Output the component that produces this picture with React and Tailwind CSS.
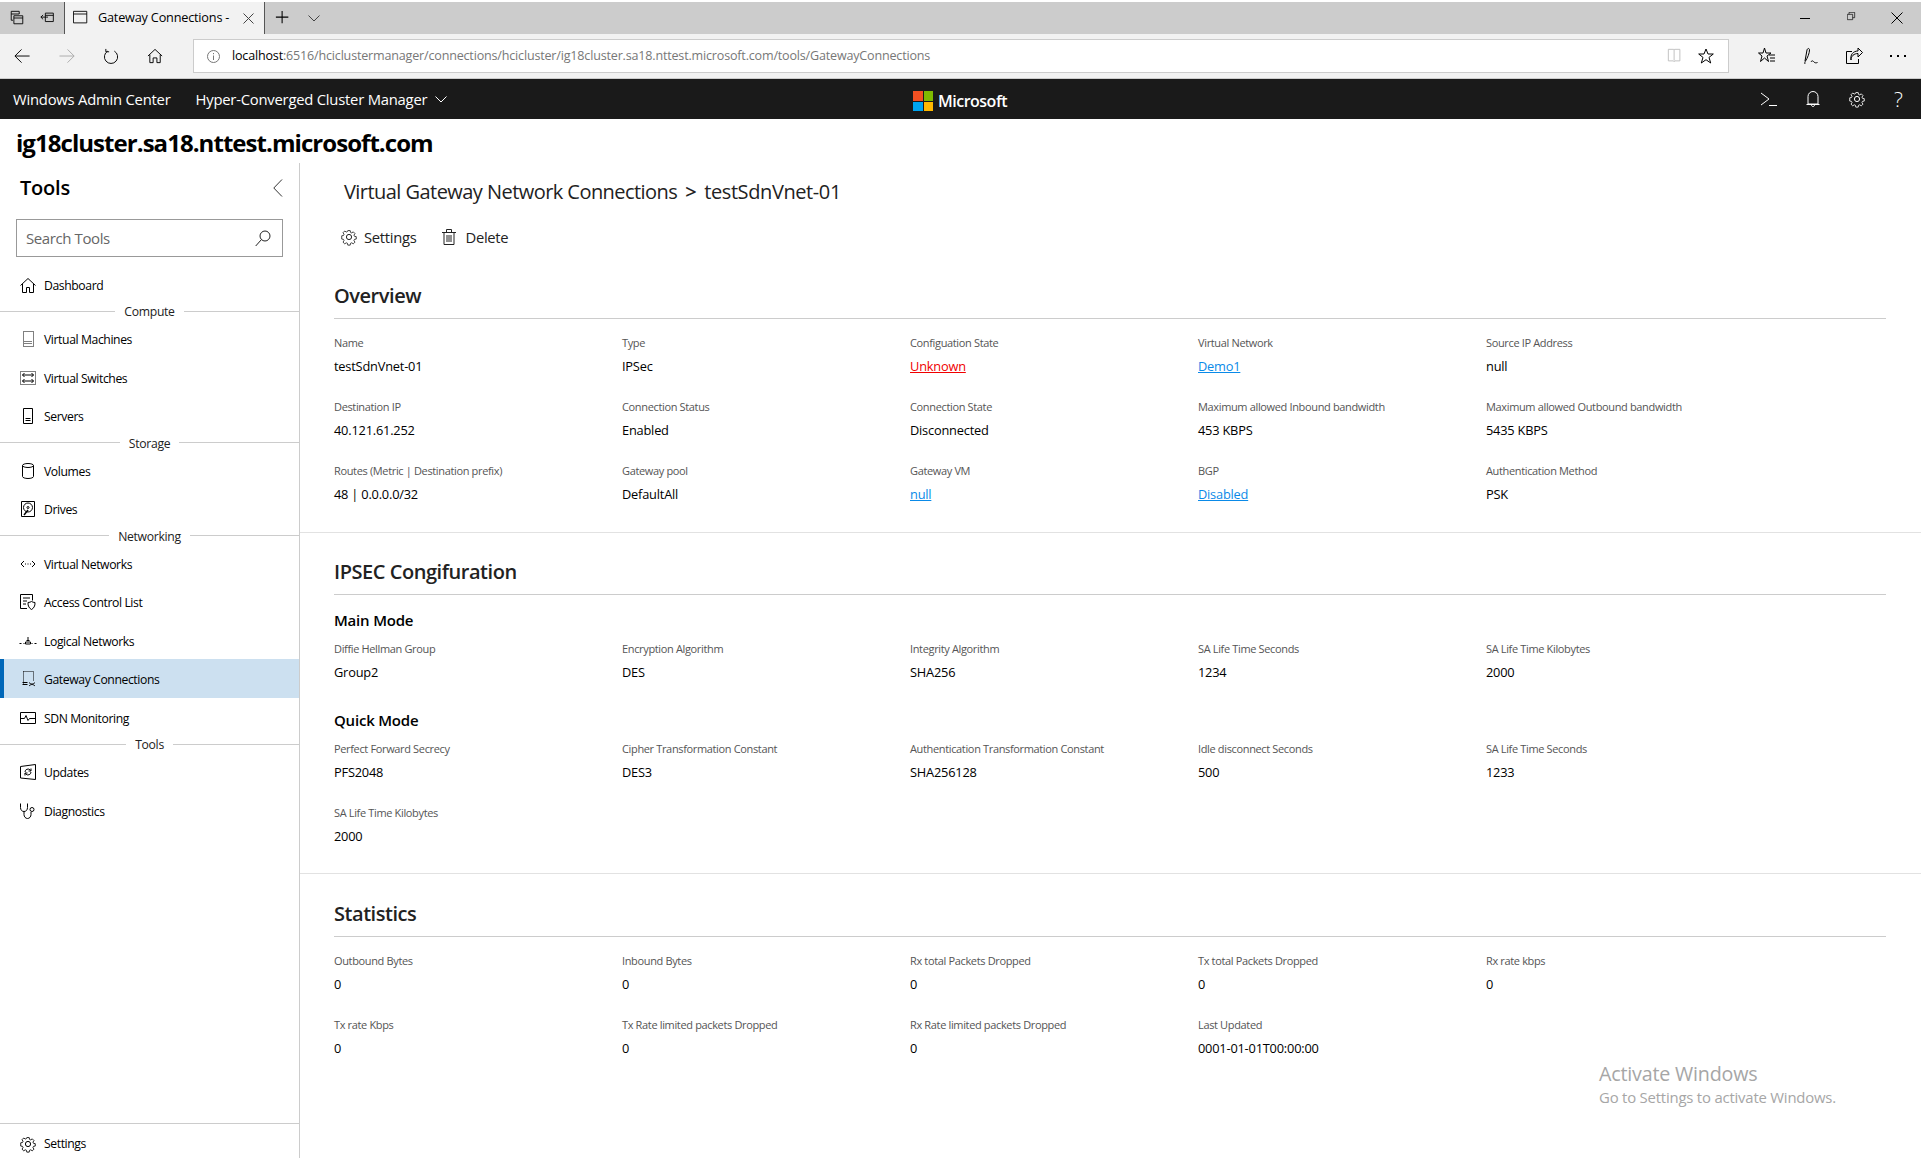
import React from "react";

const S = ({ size = 18, vb = 18, className = "", children, color = "currentColor", sw = 1 }) => (
  <svg width={size} height={size} viewBox={`0 0 ${vb} ${vb}`} fill="none" stroke={color} strokeWidth={sw} className={`shrink-0 ${className}`}>
    {children}
  </svg>
);

const Gear = ({ size = 18, color = "currentColor" }) => (
  <S size={size} color={color}>
    <circle cx="9" cy="9" r="2.6" />
    <path d="M7.6 1.5h2.8l.4 2.1 1.4.6 1.8-1.2 2 2-1.2 1.8.6 1.4 2.1.4v2.8l-2.1.4-.6 1.4 1.2 1.8-2 2-1.8-1.2-1.4.6-.4 2.1H7.600l-.4-2.100-1.400-.6-1.800 1.200-2-2 1.200-1.800-.6-1.400-2.100-.4V7.600l2.100-.4.6-1.400-1.200-1.800 2-2 1.800 1.200 1.400-.6z" transform="translate(1.3 1.300) scale(.855)" />
  </S>
);

const icons = {
  home: <S><path d="M1.500 9.500 9 2.500l7.500 7M3.500 8v8.500h4v-5h3v5h4V8" /></S>,
  vm: <S><path d="M4.500 1.500h10v15h-10z" strokeDasharray="1 1" /><path d="M5.500 11.500h8M5.500 13.500h8" strokeDasharray="1 1" /></S>,
  sw: <S><path d="M1.500 2.500h15v13h-15z" strokeDasharray="1 1" /><path d="M3.500 6h11M12.500 4l2 2-2 2M5.500 4l-2 2 2 2M3.500 12h11M12.500 10l2 2-2 2M5.500 10l-2 2 2 2" /></S>,
  server: <S><path d="M4.500 1.500h9v15h-9zM6.500 11.500h5M6.500 13.500h5" /></S>,
  volume: <S><ellipse cx="9" cy="3.500" rx="5.500" ry="2" /><path d="M3.500 3.500v11c0 1.100 2.500 2 5.500 2s5.500-.9 5.500-2v-11" /></S>,
  drive: <S><path d="M2.500 1.500h13v15h-13z" /><circle cx="9" cy="7.500" r="4.500" /><circle cx="9" cy="7.500" r="1" /><path d="M5 15l4-5" strokeWidth="1.500" /></S>,
  vnet: <S><path d="M5 6 2 9l3 3M13 6l3 3-3 3" /><path d="M6 8.500h1v1H6zM8.500 8.500h1v1h-1zM11 8.500h1v1h-1z" fill="currentColor" stroke="none" /></S>,
  acl: <S><path d="M8 15.500H1.500v-14h12v6M4 5h7M4 8h4M4 11h3" /><path d="M9 9.500c1.500 0 2.500-.5 3.500-1 1 .5 2 1 3.500 1 .3 3.500-1.500 6-3.500 7-2-1-3.800-3.500-3.500-7z" /></S>,
  lnet: <S><path d="M.5 11.500h2M4.500 11.500h1M12.500 11.500h1M15.500 11.500h2M9 5v3M6.500 12v-2h5v2h-5z" /><path d="M7.500 8.500h3" /></S>,
  gw: <S><path d="M4.500 1.500h10M14.500 1.500v9M4.500 1.500v13" strokeDasharray="1 1" /><path d="M3.500 12.500h5M3.500 14.500h5M10 12.500c2 2 4 2 6 0M10 16c2-2 4-2 6 0" /></S>,
  mon: <S><path d="M1.500 3.500h15v11h-15z" /><path d="M1.500 9.500h4l1.500-3 2 5 1.500-2h5.500" /></S>,
  upd: <S><path d="M1.500 3.500l15-2v15l-15-1.500z" /><path d="M6 9a3 3 0 0 1 5.200-2l.8.8M12 5.500v2.500H9.500M12 9a3 3 0 0 1-5.200 2l-.8-.8M6 12.500V10h2.500" /></S>,
  diag: <S><path d="M1.500 1.500v4c0 2.500 1.500 4 3.500 4s3.500-1.500 3.500-4v-4M5 9.500v3c0 2.200 1.500 4 3.500 4s3.500-1.800 3.500-4V10" /><circle cx="13" cy="7.500" r="2" /></S>,
};

const Item = ({ icon, label, active }) => (
  <div className={`flex h-[38.5px] items-center pt-[4px] text-[12.2px] tracking-[-0.4px] text-black ${active ? "border-l-4 border-[#0067b8] bg-[#cce0f0] pl-[15px]" : "pl-[19px]"}`}>
    <span className="-mt-[2px] flex w-[25px]">{icons[icon]}</span>
    <span>{label}</span>
  </div>
);

const Sep = ({ label }) => (
  <div className="flex h-[16px] items-center justify-center">
    <span className="h-px flex-1 bg-[#ccc]" />
    <span className="px-[9px] pt-[3px] text-[12.2px] tracking-[-0.3px] text-[#222]">{label}</span>
    <span className="h-px flex-1 bg-[#ccc]" />
  </div>
);

const Field = ({ label, value, kind }) => (
  <div className="h-[64px]">
    <div className="h-[16px] text-[11px] leading-[16px] tracking-[-0.35px] text-[#555]">{label}</div>
    <div className={`mt-[5px] h-[20px] text-[12.8px] leading-[20px] ${kind === "red" ? "text-[#f00000] underline" : kind === "link" ? "text-[#0a8ae8] underline" : "text-black"}`}>{value}</div>
  </div>
);

const Grid = ({ items }) => (
  <div className="grid grid-cols-[repeat(5,288px)]">
    {items.map((it, i) => <Field key={i} label={it[0]} value={it[1]} kind={it[2]} />)}
  </div>
);

const H2 = ({ children }) => (
  <div className="mr-[35px] box-content -mb-px h-[36px] border-b border-[#ccc] text-[20px] font-semibold leading-[28px] tracking-[-0.45px] text-[#222]">{children}</div>
);

const H3 = ({ children }) => (
  <div className="h-[22px] text-[15px] font-semibold leading-[22px] text-black">{children}</div>
);

export default function App() {
  return (
    <div className="relative flex h-[1158px] w-full flex-col overflow-hidden bg-white font-['Open_Sans',sans-serif] tracking-[-0.2px] text-black">
      {/* tab strip */}
      <div className="mt-[2px] flex h-[32px] items-center bg-[#ccc] text-black">
        <div className="flex w-[64px] items-center gap-[15px] pl-[9px]">
          <S size={16}><path d="M2.500 1.500h9v3h-9zM2.500 4.500v7h2M5.500 6.500h10v9h-10zM5.500 9h10" /></S>
          <S size={16}><path d="M6 3.500h9v9.500H6zM6 6h9M1 8h8M3.500 5.500 1 8l2.500 2.500" /></S>
        </div>
        <div className="flex h-full w-[201px] items-center border-x border-[#555] bg-[#f2f2f2] pl-[8px] text-[12.7px]">
          <S size={16}><path d="M.5 1.500h15v13H.5zM.5 4.500h15" /></S>
          <span className="ml-[9px]">Gateway Connections -</span>
          <svg width="11" height="11" viewBox="0 0 11 11" stroke="#444" className="ml-[14px]"><path d="M.5.5l10 10M10.500.5l-10 10" /></svg>
        </div>
        <S size={16} className="ml-[10px]"><path d="M8 1v14M1 8h14" strokeWidth="1.200" /></S>
        <svg width="12" height="7" viewBox="0 0 12 7" fill="none" stroke="#444" className="ml-[17px]"><path d="M.5.5 6 6l5.500-5.500" /></svg>
        <div className="ml-auto flex items-center">
          <span className="h-px w-[10px] bg-black" />
          <S size={12} className="ml-[37px]"><path d="M.5 3.500h8v8h-8zM3 3.500V.5h8.500v8H8.500" /></S>
          <svg width="12" height="12" viewBox="0 0 12 12" stroke="black" className="ml-[32px] mr-[18px]"><path d="M.5.5l11 11M11.500.5l-11 11" /></svg>
        </div>
      </div>
      {/* nav bar */}
      <div className="flex h-[45px] items-center border-b border-[#ccc] bg-[#f2f2f2] text-black">
        <S size={17} className="ml-[14px]"><path d="M1 8.500h15.500M8 1.500l-7 7 7 7" /></S>
        <S size={17} color="#aaa" className="ml-[28px]"><path d="M.5 8.500H16M9 1.500l7 7-7 7" /></S>
        <S size={17} className="ml-[27px]"><path d="M5 3.300A7 7 0 1 0 12 3.300M3 1v3h3.500" /></S>
        <S size={17} className="ml-[27px]"><path d="M1 8.500 8.500 1.500l7.500 7M3 7v8.500h3.500v-5h4v5H14V7" /></S>
        <div className="ml-[29px] flex h-[34px] w-[1536px] items-center border border-[#ccc] bg-white pl-[13px] text-[12.55px] tracking-[-0.18px]">
          <svg width="13" height="13" viewBox="0 0 13 13" fill="none" stroke="#777"><circle cx="6.500" cy="6.500" r="6" /><path d="M6.500 5.500v4.500M6.500 3v1.200" /></svg>
          <span className="ml-[12px] text-black">localhost</span>
          <span className="text-[#777]">:6516/hciclustermanager/connections/hcicluster/ig18cluster.sa18.nttest.microsoft.com/tools/GatewayConnections</span>
          <div className="ml-auto flex items-center">
            <S size={16} color="#bbb"><path d="M1.500 1.500h6l.5 1 .5-1h6v13h-5.500L8 15.500 7 14.500H1.500zM8 2.500v12" /></S>
            <svg width="16" height="16" viewBox="0 0 16 16" fill="none" stroke="black" className="ml-[15px] mr-[14px]"><path d="M8 1l2 5h5.300l-4.300 3.400 1.700 5.600L8 11.700 3.300 15 5 9.400.7 6H6z" /></svg>
          </div>
        </div>
        <S size={18} className="ml-[29px]"><path d="M6.500 1l1.500 5h5l-4 3 1.500 5.500-4-3.500-4 3.500L4 9 .5 6h4.500zM11 8h6M12 11h5M12 14h5" /></S>
        <S size={18} className="ml-[26px]"><path d="M3 14 5 3c.5-2 2.500-2 2.500 0 0 3-2 8-4 11-.5.8-1 2-.5 3M9 15c1-2 2-1 3 0s2 1 3.500.5" /></S>
        <S size={18} className="ml-[25px]"><path d="M7 4.500H1.500v12h12V12M6 13c0-4 3-6.500 7-6.500V10l4.500-4.500L13 1v3C8 4 5 8 6 13z" /></S>
        <div className="ml-[27px] flex gap-[5px]">
          <span className="h-[2px] w-[2px] bg-black" /><span className="h-[2px] w-[2px] bg-black" /><span className="h-[2px] w-[2px] bg-black" />
        </div>
      </div>
      {/* app header */}
      <div className="relative flex h-[40px] items-center bg-[#1a1a1a] text-[14.8px] tracking-[-0.22px] text-white">
        <span className="ml-[13px]">Windows Admin Center</span>
        <span className="ml-[25px]">Hyper-Converged Cluster Manager</span>
        <svg width="12" height="7" viewBox="0 0 12 7" fill="none" stroke="white" className="ml-[8px]"><path d="M.5.5 6 6l5.500-5.500" /></svg>
        <div className="absolute left-[913px] top-[10px] flex items-center">
          <div className="grid h-[20px] w-[20px] grid-cols-2 gap-[1px]">
            <span className="bg-[#f25022]" /><span className="bg-[#7fba00]" /><span className="bg-[#00a4ef]" /><span className="bg-[#ffb900]" />
          </div>
          <span className="ml-[5px] text-[16px] font-semibold tracking-[-0.5px]">Microsoft</span>
        </div>
        <div className="ml-auto flex items-center text-white">
          <S size={18}><path d="M1 3l8 6-8 6M9 15.500h8" /></S>
          <S size={18} className="ml-[26px]"><path d="M4 14V6.500a5 5 0 0 1 10 0V14zM2.500 14.500h13M7.500 15c0 2 3 2 3 0" /></S>
          <span className="ml-[26px]"><Gear /></span>
          <span className="ml-[28px] mr-[17px] w-[10px] text-[21px] font-light leading-none">?</span>
        </div>
      </div>
      {/* title */}
      <div className="flex h-[44px] items-center pl-[16px] pt-[4px] text-[24px] font-bold tracking-[-0.95px] text-black">ig18cluster.sa18.nttest.microsoft.com</div>
      {/* body */}
      <div className="flex min-h-0 flex-1">
        <aside className="flex w-[300px] shrink-0 flex-col border-r border-[#ccc]">
          <div className="mt-[11px] flex h-[28px] items-center justify-between pl-[20px] pr-[16px]">
            <span className="text-[20px] font-semibold leading-[28px]">Tools</span>
            <svg width="10" height="18" viewBox="0 0 10 18" fill="none" stroke="#333"><path d="M9 .5.800 9 9 17.500" /></svg>
          </div>
          <div className="ml-[16px] mt-[17px] flex h-[38px] w-[267px] items-center justify-between border border-[#999] pl-[9px] pr-[11px] text-[15px] tracking-[-0.4px] text-[#666]">
            <span>Search Tools</span>
            <svg width="16" height="17" viewBox="0 0 16 17" fill="none" stroke="#222"><circle cx="10" cy="6" r="5" /><path d="M6.500 9.500.7 16" /></svg>
          </div>
          <div className="mt-[7.500px]">
            <Item icon="home" label="Dashboard" />
            <Sep label="Compute" />
            <Item icon="vm" label="Virtual Machines" />
            <Item icon="sw" label="Virtual Switches" />
            <Item icon="server" label="Servers" />
            <Sep label="Storage" />
            <Item icon="volume" label="Volumes" />
            <Item icon="drive" label="Drives" />
            <Sep label="Networking" />
            <Item icon="vnet" label="Virtual Networks" />
            <Item icon="acl" label="Access Control List" />
            <Item icon="lnet" label="Logical Networks" />
            <Item icon="gw" label="Gateway Connections" active />
            <Item icon="mon" label="SDN Monitoring" />
            <Sep label="Tools" />
            <Item icon="upd" label="Updates" />
            <Item icon="diag" label="Diagnostics" />
          </div>
          <div className="mt-auto flex h-[35px] items-center border-t border-[#ccc] pl-[19px] pt-[6px] text-[12.2px] tracking-[-0.4px]">
            <span className="w-[25px]"><Gear /></span>
            <span>Settings</span>
          </div>
        </aside>
        <main className="min-w-0 flex-1">
          <div className="flex pl-[44px] pt-[15px] text-[20px] leading-[28px] tracking-[-0.55px] text-[#222]">
            <span>Virtual Gateway Network Connections</span>
            <span className="ml-[8px] font-semibold">&gt;</span>
            <span className="ml-[8px] tracking-[-0.4px]">testSdnVnet-01</span>
          </div>
          <div className="mt-[15px] flex h-[32px] items-center pl-[40px] text-[14.8px] tracking-[-0.3px] text-[#222]">
            <Gear />
            <span className="ml-[6px]">Settings</span>
            <S size={18} className="ml-[24px]"><path d="M2 4.500h14M6.500 4.500v-3h5v3M4 4.500v12h10v-12M7 7v7M9 7v7M11 7v7" /></S>
            <span className="ml-[7px]">Delete</span>
          </div>
          <section className="h-[280px] border-b border-[#e2e2e2] pl-[34px] pt-[29px]">
            <H2>Overview</H2>
            <div className="mt-[17px]">
              <Grid items={[
                ["Name", "testSdnVnet-01"], ["Type", "IPSec"], ["Configuation State", "Unknown", "red"], ["Virtual Network", "Demo1", "link"], ["Source IP Address", "null"],
                ["Destination IP", "40.121.61.252"], ["Connection Status", "Enabled"], ["Connection State", "Disconnected"], ["Maximum allowed Inbound bandwidth", "453 KBPS"], ["Maximum allowed Outbound bandwidth", "5435 KBPS"],
                ["Routes (Metric | Destination prefix)", "48 | 0.0.0.0/32"], ["Gateway pool", "DefaultAll"], ["Gateway VM", "null", "link"], ["BGP", "Disabled", "link"], ["Authentication Method", "PSK"],
              ]} />
            </div>
          </section>
          <section className="h-[341px] border-b border-[#e2e2e2] pl-[34px] pt-[25px]">
            <H2>IPSEC Congifuration</H2>
            <div className="mt-[15px]"><H3>Main Mode</H3></div>
            <div className="mt-[10px]">
              <Grid items={[["Diffie Hellman Group", "Group2"], ["Encryption Algorithm", "DES"], ["Integrity Algorithm", "SHA256"], ["SA Life Time Seconds", "1234"], ["SA Life Time Kilobytes", "2000"]]} />
            </div>
            <div className="mt-[4px]"><H3>Quick Mode</H3></div>
            <div className="mt-[10px]">
              <Grid items={[["Perfect Forward Secrecy", "PFS2048"], ["Cipher Transformation Constant", "DES3"], ["Authentication Transformation Constant", "SHA256128"], ["Idle disconnect Seconds", "500"], ["SA Life Time Seconds", "1233"], ["SA Life Time Kilobytes", "2000"]]} />
            </div>
          </section>
          <section className="pl-[34px] pt-[26px]">
            <H2>Statistics</H2>
            <div className="mt-[17px]">
              <Grid items={[["Outbound Bytes", "0"], ["Inbound Bytes", "0"], ["Rx total Packets Dropped", "0"], ["Tx total Packets Dropped", "0"], ["Rx rate kbps", "0"], ["Tx rate Kbps", "0"], ["Tx Rate limited packets Dropped", "0"], ["Rx Rate limited packets Dropped", "0"], ["Last Updated", "0001-01-01T00:00:00"]]} />
            </div>
          </section>
        </main>
      </div>
      <div className="pointer-events-none absolute left-[1599px] top-[1061px] text-[#a6a6a6]">
        <div className="text-[19.7px] leading-[26px]">Activate Windows</div>
        <div className="text-[14.9px] leading-[20px]">Go to Settings to activate Windows.</div>
      </div>
    </div>
  );
}
